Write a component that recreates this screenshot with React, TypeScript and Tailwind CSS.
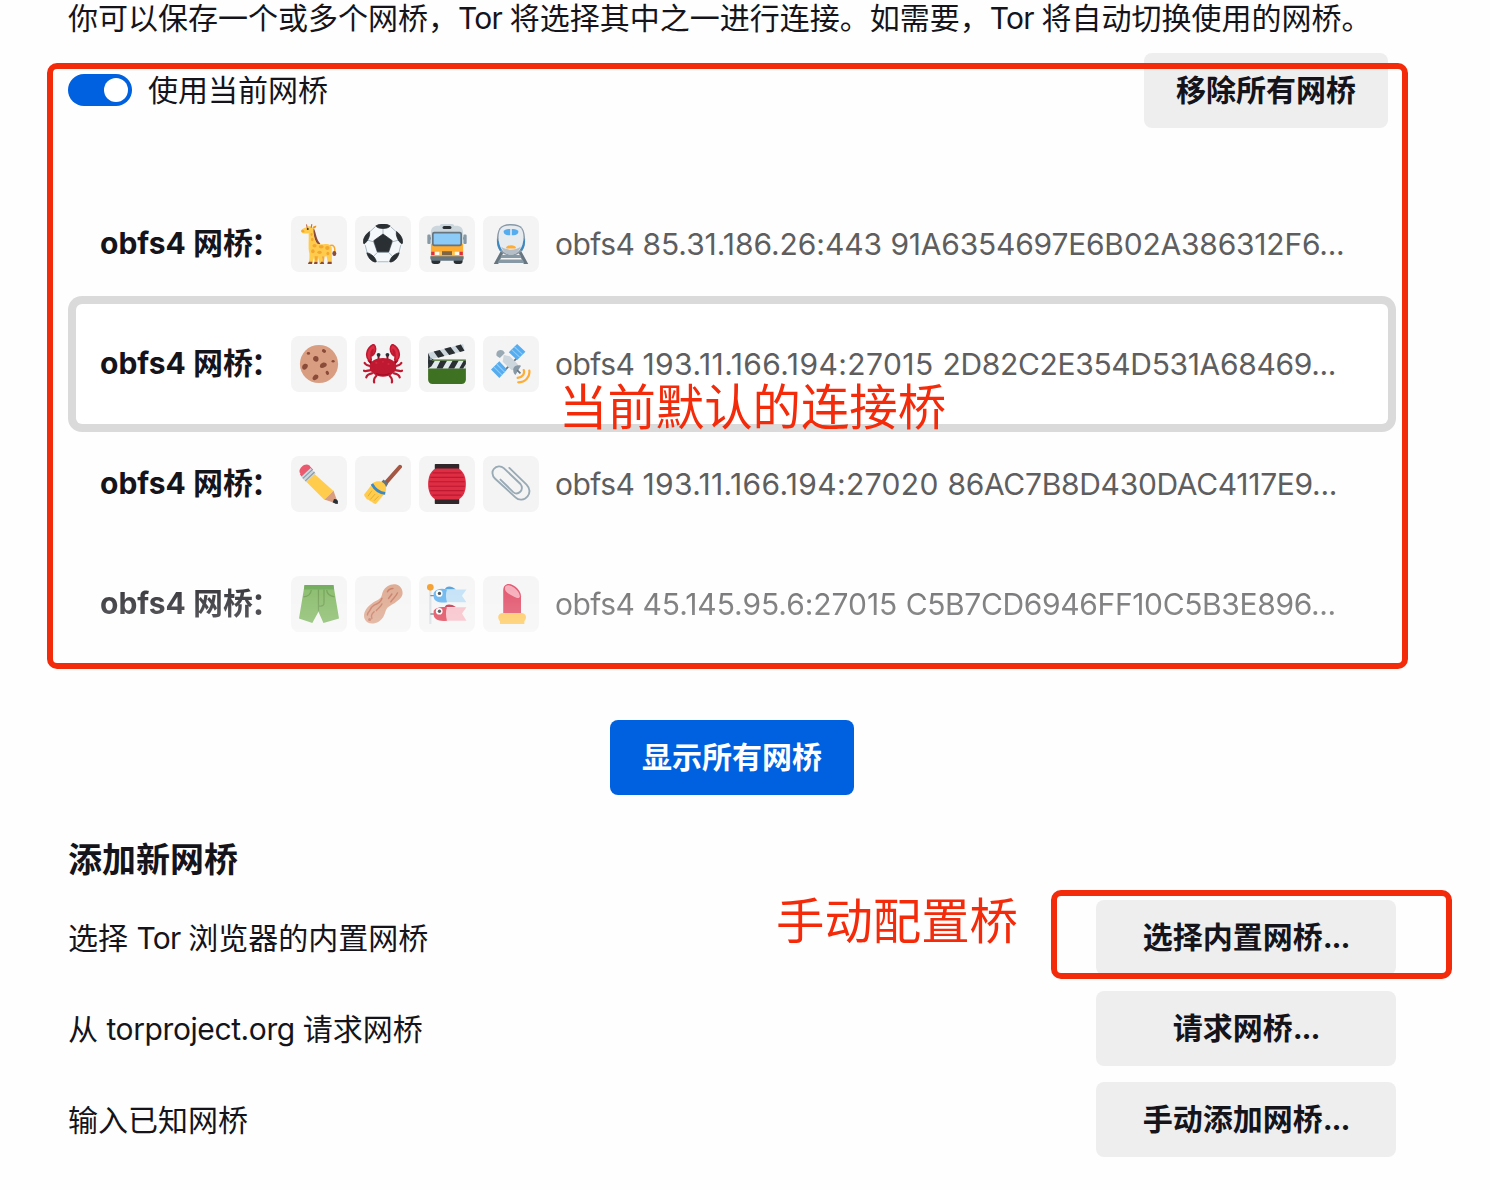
import type { ReactNode } from "react";

const Emoji = ({ children, label }: { children: ReactNode; label: string }) => (
  <span className="flex size-14 shrink-0 items-center justify-center rounded-lg bg-[#f4f4f5]">
    <svg viewBox="0 0 36 36" className="size-10" aria-label={label}>
      {children}
    </svg>
  </span>
);

const Giraffe = () => (
  <Emoji label="giraffe">
    <path d="M27 20C31 17.500 33 21 32 26" fill="none" stroke="#F4A72F" strokeWidth="1.300" />
    <ellipse cx="31.800" cy="26.600" rx="1.800" ry="2.200" fill="#8A4B38" />
    <path d="M12.500 4.500C14.500 8 14 15 18.500 18.500" stroke="#8A4B38" strokeWidth="2.200" fill="none" />
    <path d="M8.300 5L12.700 4C13.500 9 13.500 14 16 17C18 19 21 18 24 18C28 18 29.800 20 29.500 23.500C29.300 27 30 30 29.300 36H26.200L24.800 29C22.500 29.500 20.500 29 20.500 29L22.500 36H18.500L17 29.500L16.500 36H14L13.500 30L11.800 36H8.500C9.500 32 9.500 29 9.300 26C7.800 21 9.500 12 8.300 5Z" fill="#FFCB4D" />
    <path d="M2.300 5.300C3.500 3.800 6 3.500 7.500 2.500c2.500-1 5.500 0 5.500 2.500 0 2-2 2.500-3.500 3-2.500.8-6 .8-7-.4-.5-.8-.6-1.600-.2-2.300z" fill="#FFCB4D" />
    <path d="M7.300 3L6.800.7M11 3l.5-2.500" stroke="#C1694F" strokeWidth="1" strokeLinecap="round" />
    <path d="M12.500 2.500l3-1.200c.3 1.500-.8 2.500-2.500 2.700z" fill="#F4900C" />
    <path d="M2.300 5.500c1.500-.6 2.500 0 2.700 2-1.200.2-2.500 0-3-.7z" fill="#F4A72F" />
    <circle cx="7.900" cy="4.600" r=".9" fill="#292F33" />
    <g fill="#F4A72F">
      <ellipse cx="11.300" cy="9.500" rx="1" ry="1.300" />
      <ellipse cx="12" cy="14" rx="1.200" ry="1.600" />
      <ellipse cx="14" cy="19.500" rx="1.900" ry="1.600" />
      <ellipse cx="20" cy="20.500" rx="2.200" ry="1.600" />
      <ellipse cx="25.500" cy="21.500" rx="2" ry="1.800" />
      <ellipse cx="12.500" cy="24.500" rx="1.600" ry="1.800" />
      <ellipse cx="18.500" cy="25.500" rx="2" ry="1.500" />
      <ellipse cx="26" cy="26.500" rx="1.400" ry="1.600" />
      <path d="M14 29h3l-.5 4h-2zM20.500 29h2.500l-.5 5h-1z" />
    </g>
    <path d="M9 34h3l-.3 2H8zM14 34h2.700l-.2 2H13.500zM20 34h2l.7 2h-4zM26 34h3.400v2H25.500z" fill="#8A4B38" />
  </Emoji>
);

const Soccer = () => (
  <Emoji label="soccer ball">
    <circle cx="18" cy="18" r="17.500" fill="#F5F8FA" />
    <path d="M18 1v9M18 10l8.500 6L23 25.500H13L9.500 16zM9.500 16L2 14M26.500 16l7.500-2M13 25.500L8.500 30M23 25.500l4.500 4.500M11 2.500L5 8M25 2.500L31 8M2 19l2 8M34 19l-2 8M13 34h10" fill="none" stroke="#AAB8C2" strokeWidth=".9" />
    <path d="M18 9l8.300 6L23 25H13L9.700 15zM11.500 1.800C13.500.4 16 .1 18 .1s4.500.3 6.500 1.700C23 3.700 20.500 4 18 4s-5-.3-6.500-2.200zM5.800 6.800C6.800 10 4.500 15.500 1 18c-1.500-1.500-.7-7.200 4.800-11.200zM30.200 6.800C29.200 10 31.500 15.500 35 18c1.500-1.500.7-7.200-4.800-11.200zM3.500 26c3.500.3 8 4 8.500 8-1.500 1-7-1.500-8.500-8zM32.500 26c-3.500.3-8 4-8.500 8 1.500 1 7-1.500 8.500-8z" fill="#292F33" stroke="#292F33" strokeWidth=".7" strokeLinejoin="round" />
  </Emoji>
);

const Bus = () => (
  <Emoji label="bus">
    <path d="M4 13H1.500M32 13h2.500" stroke="#66757F" strokeWidth="2" />
    <rect x=".3" y="9.500" width="3" height="8.500" rx="1" fill="#8899A6" />
    <rect x="32.700" y="9.500" width="3" height="8.500" rx="1" fill="#8899A6" />
    <rect x="4" y="30" width="8" height="6" rx="2.500" fill="#292F33" />
    <rect x="24" y="30" width="8" height="6" rx="2.500" fill="#292F33" />
    <path d="M3.500 8c0-4.500 2-6.500 6.500-6.500h1.500C12 .3 13 0 14 0h8c1 0 2 .3 2.500 1.500H26c4.500 0 6.500 2 6.500 6.500v11h-29z" fill="#CCD6DD" />
    <rect x="14" y="1.700" width="8" height="2.800" rx="1.400" fill="#292F33" />
    <path d="M3.500 18h29v12h-29z" fill="#FFAC33" />
    <path d="M3 29h30v1.500c0 1.500-1 2.500-2.500 2.500h-25C4 33 3 32 3 30.500z" fill="#66757F" />
    <rect x="4.500" y="7" width="27" height="13" rx="2" fill="#66757F" />
    <rect x="6" y="8.500" width="24" height="10" rx="1" fill="#8CCAF7" />
    <path d="M10 25h16v3H10z" fill="#FFC24D" />
    <path d="M13.500 24.500h9V28h-9z" fill="#806542" />
    <path d="M3.800 25h3v3h-3zM29.200 25h3v3h-3z" fill="#DD2E44" />
    <path d="M7 25h4v3H7zM25 25h4v3h-4z" fill="#FFF8E8" />
  </Emoji>
);

const Train = () => (
  <Emoji label="train">
    <path d="M9 24h18l6.500 12H29.500L25 26H11L6.500 36H2.500z" fill="#66757F" />
    <path d="M7.500 32h21l1.500 3H6zM9.500 28h17l1 2.500h-19z" fill="#8899A6" />
    <path d="M5.300 16C5.300 4.500 8 0 18 0s12.700 4.500 12.700 16c0 8-6 12.500-12.700 12.500S5.300 24 5.300 16z" fill="#8899A6" />
    <path d="M5.400 13L8 17l2 6-2 1.200C6.500 22 5.200 18.500 5.300 13zM30.600 13L28 17l-2 6 2 1.200c1.500-2.200 2.800-5.700 2.700-11.200z" fill="#3B88C3" />
    <path d="M6.800 12C7 4.500 9 1.300 18 1.300S29 4.500 29.200 12c0 9.500-4.700 15.500-11.200 15.500S6.800 21.500 6.800 12z" fill="#E6EBEF" />
    <path d="M9.200 20.500c5.500 3.500 12.100 3.500 17.600 0-2 5-5 7.300-8.800 7.300s-6.800-2.300-8.800-7.300z" fill="#B5BEC6" />
    <path d="M11.500 6c2-1.200 4-1.500 5.800-1.500v5.700h-1.500c-3-.2-5-1.500-4.300-4.200zM24.500 6c-2-1.200-4-1.500-5.800-1.500v5.700h1.500c3-.2 5-1.500 4.300-4.200z" fill="#55ACEE" />
    <path d="M14.500 20c2-1.200 5-1.200 7 0 1.200.6 1.200 2 .2 2h-7.400c-1 0-1-1.400.2-2z" fill="#FFAC33" />
  </Emoji>
);

const Cookie = () => (
  <Emoji label="cookie">
    <circle cx="18" cy="18" r="17.200" fill="#D99E82" />
    <g fill="#8A4B38">
      <ellipse cx="8.500" cy="8.500" rx="1.500" ry="1.200" />
      <ellipse cx="22.500" cy="6.300" rx="2" ry="1.500" transform="rotate(30 22.500 6.300)" />
      <path d="M13 12c1.500-2 4-1 4.500.5.500 2-.5 3.500-2 3.500-2 0-3.500-2-2.500-4zM19.500 18c2-2.500 6-1.500 5.500 1-.3 2-5 3.500-6 2-.5-1 0-2 .5-3zM3.500 19c1.500-2 4.500-1.500 4.500.5 0 2.300-3 4.500-4.500 3.200-1-1-.8-2.500 0-3.700zM13 29c1.500-2.500 4.500-1.500 4.500.5s-3.500 4-5 2.500c-.7-.8-.2-2 .5-3z" />
      <ellipse cx="25.500" cy="26" rx="1.900" ry="1.400" transform="rotate(60 25.500 26)" />
      <ellipse cx="30.700" cy="15.500" rx="1.400" ry="1.100" />
    </g>
  </Emoji>
);

const Crab = () => (
  <Emoji label="crab">
    <g fill="none" stroke="#BE1931" strokeWidth="2" strokeLinecap="round">
      <path d="M8 20C4.500 19.500 2.500 19 1.500 17M7 23.500C4 24 2 25 .8 24M8 26.500C5 27 3.500 28 3 30M12 28.500C10.500 30 9.500 32 10 34.500M28 20c3.500-.5 5.500-1 6.500-3M29 23.500c3 .5 5 1.500 6.200.5M28 26.500c3 .5 4.500 1.500 5 3.500M24 28.500c1.500 1.500 2.500 3.500 2 6" />
    </g>
    <path d="M5 14L9 19M31 14L27 19" stroke="#A0041E" strokeWidth="2.600" />
    <path d="M5.500 15C2 12 2.500 3.500 9.500.4C12 2 12.300 7.500 8.300 10.500L9 5C7 6.500 6.500 9 7.500 14.500ZM30.500 15C34 12 33.500 3.500 26.500.4C24 2 23.700 7.500 27.700 10.500L27 5C29 6.500 29.500 9 28.500 14.500Z" fill="#DD2E44" stroke="#BE1931" strokeWidth="1.400" strokeLinejoin="round" />
    <path d="M14 10v4.500M22 10v4.500" stroke="#A0041E" strokeWidth="1.700" />
    <path d="M6 20.500c0-5.500 5.500-8 12-8s12 2.500 12 8c0 5.500-6 9-12 9s-12-3.500-12-9z" fill="#BE1931" />
    <circle cx="14" cy="9.700" r="1.700" fill="#292F33" />
    <circle cx="22" cy="9.700" r="1.700" fill="#292F33" />
    <path d="M12 26.500c4 1.800 8 1.800 12 0" stroke="#A0041E" strokeWidth=".8" fill="none" />
    <g fill="#D32840">
      <circle cx="12" cy="17" r="1" />
      <circle cx="18" cy="16" r=".8" />
      <circle cx="23" cy="18" r="1" />
    </g>
  </Emoji>
);

const Clapper = () => (
  <Emoji label="clapper board">
    <path d="M1 14h34v18c0 2.500-1.500 4-4 4H5c-2.500 0-4-1.500-4-4z" fill="#3F7123" />
    <path d="M1 15h34v7H1z" fill="#E1E8ED" />
    <path d="M1 8L32.500 0 34 6 3 14z" fill="#CCD6DD" />
    <path d="M6 6.700l5.500-1.400 4.200 5.500-5.700 1.500zM15.500 4.300l5.700-1.500 4.300 5.500-5.500 1.500zM25.500 1.800l5-1.300 3.200 5.600-4 1zM12 15h6l-4 7H8.500zM23 15h5.500l-4 7H19zM33 15h2v3l-2.500 4H29zM1 15h6l-3 5-3 2z" fill="#292F33" />
    <path d="M1 8l2.500 5.500H6L1 18z" fill="#292F33" />
    <circle cx="3.500" cy="13.500" r="1.200" fill="#8899A6" />
  </Emoji>
);

const Satellite = () => (
  <Emoji label="satellite">
    <path d="M8 28L28 8" stroke="#66757F" strokeWidth="1.500" />
    <path d="M16 7.500L23.500 0l7.500 7-7.500 7.500zM0 23l7.500-7.500 7 7.500L7.500 30.500z" fill="#55ACEE" />
    <path d="M18.500 5L26 12M21 2.500l7.500 7M2.500 20.500l7.500 7.500M5 18l7.500 7.500" stroke="#8CCAF7" strokeWidth="1" />
    <path d="M11.500 10l5.500 1 7 7c1 1.500-3.500 6-5.500 5.500L10.500 16z" fill="#CCD6DD" />
    <path d="M5 8c.5-2.500 4-3.500 6-2l1.500 2L8 12.500 5.500 11C4.700 10.300 4.700 9 5 8z" fill="#99AAB5" />
    <path d="M20 23c0-2.500 3-5 7-3.500L22 28c-1.500-1-2-3-2-5z" fill="#8899A6" />
    <path d="M23.500 23.500l3 3" stroke="#66757F" strokeWidth="1.500" />
    <path d="M29.500 23.500c1 3-1 6.500-5.500 7M34.500 24c.8 5.500-3.500 10.500-10 10.500" stroke="#FFAC33" strokeWidth="2" strokeLinecap="round" fill="none" />
  </Emoji>
);

const Pencil = () => (
  <Emoji label="pencil">
    <path d="M35 36l-3.500-1.200-8.800-2.800 8.300-8.200 2.800 8z" fill="#D99E82" />
    <path d="M11 6.200l20 18-8.300 8L4.500 14z" fill="#FFCC4D" />
    <path d="M7 3.800L1.500 9c-2-2-1-4.500 1-6.500S7.500-.2 9.500 1.500l.5 1z" fill="#EA596E" />
    <path d="M9 1.200l3.800 4L4.200 13.700.8 9.200z" fill="#EA596E" />
    <path d="M10.500 3.500l4.500 5-8.500 8-4.500-5z" fill="#CCD6DD" />
    <path d="M12 5l-8.500 8M14 7.200l-8.300 8" stroke="#8899A6" strokeWidth="1" />
    <path d="M31.500 31.500l2.300.2L35 36l-4.700-1.300z" fill="#292F33" />
    <circle cx="33.300" cy="34" r="1.800" fill="#292F33" />
  </Emoji>
);

const Brush = () => (
  <Emoji label="paintbrush">
    <path d="M33.300 2.500L20.500 17" stroke="#A45743" strokeWidth="3.600" strokeLinecap="round" />
    <path d="M18.500 14l4.200 3.500-2 3.500-5-4z" fill="#66757F" />
    <path d="M9 17c2.500-2 7-2 9.500 0s3 6 1.500 9L11.500 36c-2.500-.5-3.500-2-3.500-2s-2-.3-3-1.800c0 0-2-.3-2.500-1.900C1.200 29.500 1 27.500 1 27.500z" fill="#FFCC4D" />
    <path d="M8 18c2.500 4.500 7 8 12 8.500" stroke="#3B88C3" strokeWidth="2.400" fill="none" />
    <path d="M8 24L4.500 29M11 27l-4.500 5M14 29l-4 4" stroke="#D9A52B" strokeWidth=".7" />
  </Emoji>
);

const Lantern = () => (
  <Emoji label="red paper lantern">
    <rect x="7" width="22" height="6" rx=".6" fill="#31272A" />
    <rect x="7" y="30" width="22" height="6" rx=".6" fill="#31272A" />
    <path d="M8 4h20c5 2 7 8 7 14s-2 12-7 14H8C3 30 1 24 1 18S3 6 8 4z" fill="#DD2E44" />
    <path d="M5 8h26M3 12h30M2 16h32M2 20h32M3 24h30M5 28h26" stroke="#BE1931" strokeWidth="1" />
  </Emoji>
);

const Clip = () => (
  <Emoji label="paperclip">
    <path d="M16.500 3.500L32 18.500c3 3.200 3.500 7.500 1 10.500-3 3.800-8 4-11 1L3.500 13C.8 10.500.8 6.500 2.500 4.500c2.500-3 6.500-3 9-.8L26.500 18c2 2.500 1.500 5.500-.2 7-2 2-4.500 1.800-6.300.3L8.500 14" fill="none" stroke="#99AAB5" strokeWidth="1.700" strokeLinecap="round" />
  </Emoji>
);

const Shorts = () => (
  <Emoji label="shorts">
    <path d="M5 1h26l5 30L22 35l-4.500-10L12 35 0 31z" fill="#77B255" />
    <path d="M5 1h26l.6 4H4.400z" fill="#5C9F42" />
    <path d="M17.500 5v19M22.500 5v12c0 1.800-2 3-4.500 3M11 5.500c0 3.500-3 6-7 6M25 5.500c0 3.500 3 5.500 7 6" stroke="#5C913B" strokeWidth="1.100" fill="none" />
  </Emoji>
);

const Peanut = () => (
  <Emoji label="peanut">
    <path d="M35 5c-2-5.500-8.500-6-13-3-3.500 2.300-4.500 5-5 8-.8 4.300-5 4.500-9 7.500-5 3.500-8.500 9-6.500 14s8.500 5 12.500 2.500c4.500-3 5-6 6.500-10 1.200-3.500 4-4.500 8-7C34 13.500 37 10.500 35 5z" fill="#D99E82" />
    <path d="M22 7c1-2 3-3 5-3M31 8c-1 3-4 5-6 8M26 9l-3 4M17 13c-1 3-4 5-7 6-2 1-3 3-4 5M17 18c-1 3-4 4-5 6M4 28c0-2 1-3 2-4M10 25c-2 2-3 3-2 6" stroke="#C1694F" strokeWidth="1.300" strokeLinecap="round" fill="none" />
    <circle cx="6" cy="32" r="1.400" fill="#C1694F" />
  </Emoji>
);

const Carp = () => (
  <Emoji label="carp streamer">
    <rect x="2" y="4" width="2" height="32" fill="#D5DBE0" />
    <path d="M3 10.500h5M3 27h5" stroke="#66757F" strokeWidth="1.200" />
    <circle cx="3" cy="3" r="3" fill="#F4900C" />
    <path d="M16 5c1-3.500 6-4 10 0z" fill="#3B94D9" />
    <path d="M16 20.700c1-3 6-3 10 0z" fill="#BE1931" />
    <path d="M13 5h22.500l-4 5.500 4 6H13z" fill="#BBDDF5" />
    <path d="M6 8c2-3.500 7-4.500 12-3-1.500 4-1 8 0 11.500-7 1-12-1-12-5z" fill="#55ACEE" />
    <path d="M13 21h22.500l-4 5.500 4 6.500H13z" fill="#F7B8C2" />
    <path d="M6 24c2-3 7-4 12-3-1.500 4-1 8 0 12-7 1-12-1-12-5.500z" fill="#DD2E44" />
    <circle cx="11" cy="8.500" r="3" fill="#FFF" />
    <circle cx="11" cy="24.500" r="3" fill="#FFF" />
    <circle cx="11.200" cy="8.500" r="1.500" fill="#292F33" />
    <circle cx="11.200" cy="24.500" r="1.500" fill="#292F33" />
  </Emoji>
);

const Lipstick = () => (
  <Emoji label="lipstick">
    <path d="M11 6c0-4 2-6 5-6 5 0 11 6 11 11v17H11z" fill="#DD3B57" />
    <path d="M12.500 4c0-3 3-4 7-1.500 4 2.300 6.500 6 6.500 9-1 2-3 1-6-.5-4-2.200-7.500-4-7.500-7z" fill="#F4A0AF" />
    <path d="M11 26h16c3 0 4.500 1.500 4.500 4 0 1-.5 2.500-1.500 3.500V36H8v-2.500C7 32.500 6.500 31 6.500 30c0-2.500 1.500-4 4.500-4z" fill="#FFC34D" />
  </Emoji>
);

interface Bridge {
  host: string;
  hostTracking: string;
  hash: string;
  hashTracking: string;
  icons: ReactNode;
  selected?: boolean;
}

const bridges: Bridge[] = [
  { host: "85.31.186.26:443", hostTracking: "tracking-[-0.05px]", hash: "91A6354697E6B02A386312F6...", hashTracking: "tracking-[-0.22px]", icons: <><Giraffe /><Soccer /><Bus /><Train /></> },
  { host: "193.11.166.194:27015", hostTracking: "tracking-[0.43px]", hash: "2D82C2E354D531A68469...", hashTracking: "tracking-[-0.34px]", icons: <><Cookie /><Crab /><Clapper /><Satellite /></>, selected: true },
  { host: "193.11.166.194:27020", hostTracking: "tracking-[0.34px]", hash: "86AC7B8D430DAC4117E9...", hashTracking: "tracking-[-0.3px]", icons: <><Pencil /><Brush /><Lantern /><Clip /></> },
  { host: "45.145.95.6:27015", hostTracking: "tracking-[-0.05px]", hash: "C5B7CD6946FF10C5B3E896...", hashTracking: "tracking-[-0.36px]", icons: <><Shorts /><Peanut /><Carp /><Lipstick /></> },
];

const BridgeRow = ({ bridge }: { bridge: Bridge }) => (
  <div className={`flex h-[120px] items-center rounded-md pl-6 ${bridge.selected ? "bg-white ring-8 ring-[#dadada]" : ""}`}>
    <span className="w-[191px] shrink-0 pb-0.5 font-bold">obfs4 网<span className="tracking-[-2px]">桥</span>：</span>
    <span className="flex gap-2">{bridge.icons}</span>
    <span className="ml-4 whitespace-nowrap text-[#5e5e60]">
      <span className="tracking-[-0.5px]">obfs4 </span>
      <span className={bridge.hostTracking}>{bridge.host} </span>
      <span className={bridge.hashTracking}>{bridge.hash}</span>
    </span>
  </div>
);

const GrayButton = ({ children, className }: { children: ReactNode; className: string }) => (
  <button className={`flex h-[75px] shrink-0 items-center justify-center rounded-lg bg-[#eeeeef] pb-0.5 font-bold ${className}`}>{children}</button>
);

const Tor = () => <span className="tracking-[-0.75px]">Tor </span>;

const options = [
  { label: <>选择 <Tor />浏览器的内置网桥</>, action: "选择内置网桥" },
  { label: <>从 <span className="tracking-[-0.4px]">torproject.org </span>请求网桥</>, action: "请求网桥" },
  { label: <>输入已知网桥</>, action: "手动添加网桥" },
];

export default function App() {
  return (
    <main className="relative h-[1190px] w-[1490px] overflow-hidden bg-[#fefefe] pl-[68px] font-['Inter','Noto_Sans_CJK_SC',sans-serif] text-[30px] leading-10 text-[#15141a]">
      <p className="h-[38px] whitespace-nowrap leading-[36px]">
        你可以保存一个或多个网桥，<Tor />将选择其中之一进行连接。如需要，<Tor />将自动切换使用的网桥。
      </p>

      <header className="mt-[15px] flex h-[75px] w-[1320px] items-center justify-between">
        <label className="flex items-center gap-4 pb-0.5">
          <span className="flex h-8 w-16 items-center justify-end rounded-full bg-[#0061e0] pr-1">
            <span className="size-6 rounded-full bg-white" />
          </span>
          使用当前网桥
        </label>
        <GrayButton className="w-[244px]">移除所有网桥</GrayButton>
      </header>

      <section className="ml-2 mt-14 w-[1312px]">
        {bridges.slice(0, 3).map((b) => <BridgeRow key={b.host} bridge={b} />)}
        <div className="mask-linear-[180deg] mask-linear-from-black/100 mask-linear-to-black/55">
          <BridgeRow bridge={bridges[3]} />
        </div>
      </section>

      <div className="mt-14 flex w-[1328px] justify-center">
        <button className="flex h-[75px] w-[244px] items-center justify-center rounded-lg bg-[#0061e0] pb-0.5 font-bold text-white">显示所有网桥</button>
      </div>

      <h2 className="mt-[41px] h-12 text-[34px] font-bold leading-12">添加新网桥</h2>

      <section className="mt-4 flex w-[1328px] flex-col gap-4">
        {options.map((o) => (
          <div key={o.action} className="flex items-center justify-between">
            <span>{o.label}</span>
            <GrayButton className="w-[300px]">{o.action}<span className="tracking-[-1.2px]">...</span></GrayButton>
          </div>
        ))}
      </section>

      <div className="absolute left-[47px] top-[63px] h-[606px] w-[1361px] rounded-[10px] border-6 border-[#f42b0a]" />
      <div className="absolute left-[1051px] top-[890px] h-[89px] w-[401px] rounded-[10px] border-6 border-[#f42b0a]" />
      <span className="absolute left-[559px] top-[376px] whitespace-nowrap text-[48.4px] leading-[64px] text-[#f42b0a]">当前默认的连接桥</span>
      <span className="absolute left-[776px] top-[890px] whitespace-nowrap text-[48.4px] leading-[64px] text-[#f42b0a]">手动配置桥</span>
    </main>
  );
}
